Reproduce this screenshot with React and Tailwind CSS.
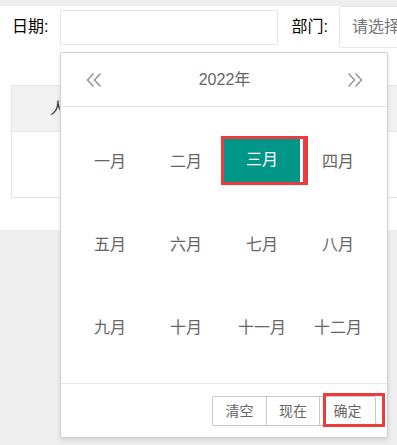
const font = { fontFamily: '"Liberation Sans", "Noto Sans CJK SC", sans-serif' };

const months = ['一月', '二月', '三月', '四月', '五月', '六月', '七月', '八月', '九月', '十月', '十一月', '十二月'];

const DoubleArrow = ({ dir }) => (
  <svg width="16" height="14" viewBox="0 0 16 14" fill="none" stroke="#9a9a9a" strokeWidth="1.6">
    {dir === 'left' ? (
      <>
        <polyline points="7.5,0.5 1.5,7 7.5,13.5" />
        <polyline points="14.5,0.5 8.5,7 14.5,13.5" />
      </>
    ) : (
      <>
        <polyline points="1.5,0.5 7.5,7 1.5,13.5" />
        <polyline points="8.5,0.5 14.5,7 8.5,13.5" />
      </>
    )}
  </svg>
);

const MonthPicker = () => (
  <div className="absolute left-[60px] top-[52px] w-[328px] h-[386px] bg-white border border-[#d2d2d2] rounded-[2px] shadow-[0_2px_4px_rgba(0,0,0,0.12)] flex flex-col">
    {/* Header */}
    <div className="h-[54px] border-b border-[#e6e6e6] flex items-center justify-between pl-[25px] pr-[24px]">
      <DoubleArrow dir="left" />
      <span className="text-[16px] text-[#666]">2022年</span>
      <DoubleArrow dir="right" />
    </div>

    {/* Months */}
    <div className="grid grid-cols-4 px-[11px] pt-[13px] pb-[14px]">
      {months.map((m) =>
        m === '三月' ? (
          <div key={m} className="h-[83px] flex items-center">
            <div className="-ml-[3px] -mt-[3px] border-[3px] border-r-[5px] border-[#ee3b3b] bg-white pr-[3px]">
              <div className="w-[76px] h-[43px] bg-[#009688] text-white text-[16px] flex items-center justify-center">
                {m}
              </div>
            </div>
          </div>
        ) : (
          <div key={m} className="h-[83px] flex items-center justify-center text-[16px] text-[#666]">
            {m}
          </div>
        )
      )}
    </div>

    {/* Footer */}
    <div className="relative border-t border-[#e6e6e6] flex-1 flex justify-end items-start pt-[12px] pr-[11px]">
      <div className="flex">
        <button className="w-[55px] h-[30px] border border-[#c9c9c9] text-[14px] text-[#666] rounded-l-[2px]">清空</button>
        <button className="-ml-px w-[54px] h-[30px] border border-[#c9c9c9] text-[14px] text-[#666]">现在</button>
        <button className="-ml-px w-[57px] h-[30px] border border-[#c9c9c9] text-[14px] text-[#666] rounded-r-[2px]">确定</button>
      </div>
      <div className="absolute left-[262px] top-[9px] w-[62px] h-[34px] border-[3px] border-[#ee3b3b]" />
    </div>
  </div>
);

export default function App() {
  return (
    <div className="relative min-h-screen bg-[#eeeeee] overflow-hidden" style={font}>
      <div className="bg-white h-[224px]">
        {/* Filters */}
        <div className="flex items-center h-[42px] mt-[6px] pl-[12px] whitespace-nowrap">
          <span className="shrink-0 text-[16px] text-black">日期:</span>
          <div className="shrink-0 ml-[12px] w-[218px] h-[35px] border border-[#e6e6e6] rounded-[2px] bg-white" />
          <span className="shrink-0 ml-[13px] text-[16px] text-black">部门:</span>
          <div className="shrink-0 ml-[11px] w-[160px] h-[42px] border border-[#e6e6e6] rounded-[3px] flex items-center pl-[12px] text-[16px] text-[#757575]">
            请选择部门
          </div>
        </div>

        {/* Table */}
        <div className="ml-[11px] mt-[37px] w-[420px] border border-[#e6e6e6]">
          <div className="h-[46px] bg-[#f2f2f2] border-b border-[#e6e6e6] flex items-center pl-[38px] text-[16px] text-[#333]">
            人员
          </div>
          <div className="h-[65px] bg-white" />
        </div>
      </div>

      <MonthPicker />
    </div>
  );
}
